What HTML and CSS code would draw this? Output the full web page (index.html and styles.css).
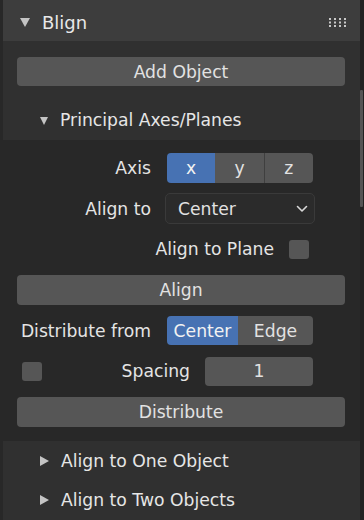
FILE: index.html
```html
<!DOCTYPE html>
<html>
<head>
<meta charset="utf-8">
<link rel="stylesheet" href="styles.css">
</head>
<body>
<div class="app">
  <div class="panel">
    <div class="hdr">
      <span class="tri tri-down-big"></span>
      <span class="title">Blign</span>
      <svg class="grip" width="18" height="10" viewBox="0 0 18 10">
        <g fill="#c8c8c8">
          <rect x="0" y="0" width="2" height="2"/><rect x="5" y="0" width="2" height="2"/><rect x="10" y="0" width="2" height="2"/><rect x="15" y="0" width="2" height="2"/>
          <rect x="0" y="3.5" width="2" height="2"/><rect x="5" y="3.5" width="2" height="2"/><rect x="10" y="3.5" width="2" height="2"/><rect x="15" y="3.5" width="2" height="2"/>
          <rect x="0" y="7" width="2" height="2"/><rect x="5" y="7" width="2" height="2"/><rect x="10" y="7" width="2" height="2"/><rect x="15" y="7" width="2" height="2"/>
        </g>
      </svg>
    </div>
    <div class="pbody">
      <div class="btn wide add">Add Object</div>
      <div class="subhdr">
        <span class="tri tri-down"></span>
        <span class="subtitle">Principal Axes/Planes</span>
      </div>
      <div class="subbody">
        <div class="row">
          <span class="label">Axis</span>
          <div class="seg axis">
            <span class="segbtn on">x</span>
            <span class="segbtn">y</span>
            <span class="segbtn">z</span>
          </div>
        </div>
        <div class="row">
          <span class="label">Align to</span>
          <div class="dropdown">
            <span>Center</span>
            <svg class="chev" width="12" height="8" viewBox="0 0 12 8"><path d="M1.5 1.5 L6 6 L10.5 1.5" fill="none" stroke="#d8d8d8" stroke-width="1.6" stroke-linecap="round" stroke-linejoin="round"/></svg>
          </div>
        </div>
        <div class="row plane">
          <span class="plabel">Align to Plane</span>
          <span class="check"></span>
        </div>
        <div class="btn wide tall">Align</div>
        <div class="row">
          <span class="label">Distribute from</span>
          <div class="seg dist">
            <span class="segbtn on c">Center</span>
            <span class="segbtn e">Edge</span>
          </div>
        </div>
        <div class="row spacing">
          <span class="check first"></span>
          <span class="slabel">Spacing</span>
          <div class="num">1</div>
        </div>
        <div class="btn wide tall">Distribute</div>
      </div>
      <div class="subhdr closed">
        <span class="tri tri-right"></span>
        <span class="subtitle">Align to One Object</span>
      </div>
      <div class="subhdr closed last">
        <span class="tri tri-right"></span>
        <span class="subtitle">Align to Two Objects</span>
      </div>
    </div>
  </div>
  <div class="scroll"><div class="thumb"></div></div>
</div>
</body>
</html>
```

FILE: styles.css
```css
html, body {
  margin: 0;
  padding: 0;
  width: 364px;
  height: 520px;
  overflow: hidden;
  background: #282828;
  font-family: "DejaVu Sans", sans-serif;
  color: #e4e4e4;
}
.app {
  display: flex;
  height: 520px;
}
.panel {
  width: 357px;
  margin-left: 3px;
  display: flex;
  flex-direction: column;
  background: #303030;
}
.hdr {
  height: 41px;
  background: #3d3d3d;
  display: flex;
  align-items: center;
  padding-left: 17px;
  box-sizing: border-box;
}
.tri {
  display: inline-block;
  width: 0;
  height: 0;
}
.tri-down-big {
  border-left: 5px solid transparent;
  border-right: 5px solid transparent;
  border-top: 9px solid #c4c4c4;
  margin-top: 3px;
}
.title {
  font-size: 18px;
  margin-left: 12px;
  margin-top: 3px;
  color: #e8e8e8;
}
.grip {
  margin-left: auto;
  margin-right: 13px;
  margin-top: 4px;
}
.pbody {
  flex: 1;
  display: flex;
  flex-direction: column;
  background: #303030;
}
.btn {
  height: 29px;
  background: #565656;
  border-radius: 4px;
  display: flex;
  align-items: center;
  justify-content: center;
  font-size: 17.2px;
  color: #e2e2e2;
}
.btn.wide {
  margin: 0 15px 0 14px;
}
.btn.tall { height: 30px; }
.btn.add {
  margin-top: 16px;
  margin-bottom: 14px;
}
.subhdr {
  height: 40px;
  display: flex;
  align-items: center;
  padding-left: 37px;
  box-sizing: border-box;
}
.tri-down {
  border-left: 4.5px solid transparent;
  border-right: 4.5px solid transparent;
  border-top: 8px solid #c4c4c4;
  margin-top: 1px;
}
.tri-right {
  border-top: 5px solid transparent;
  border-bottom: 5px solid transparent;
  border-left: 9px solid #c4c4c4;
}
.subtitle {
  font-size: 17.2px;
  margin-left: 12px;
  color: #e6e6e6;
}
.subhdr.closed {
  height: 40px;
  padding-left: 37px;
}
.subhdr.closed.last { height: 39px; }
.subbody {
  background: #282828;
  display: flex;
  flex-direction: column;
  gap: 10.67px;
  padding: 13px 0 14px 0;
}
.row {
  height: 30px;
  display: flex;
  align-items: center;
  margin: 0 15px 0 14px;
  font-size: 17.2px;
}
.label {
  width: 134px;
  text-align: right;
  margin-right: 16px;
  white-space: nowrap;
}
.seg {
  display: flex;
  height: 30px;
  width: 146px;
  border-radius: 4px;
  overflow: hidden;
}
.seg.dist { height: 29px; }
.segbtn {
  flex: 1;
  background: #565656;
  display: flex;
  align-items: center;
  justify-content: center;
  color: #e2e2e2;
}
.segbtn + .segbtn {
  border-left: 1px solid #3f3f3f;
}
.segbtn.on {
  background: #4772b3;
  color: #f2f2f2;
}
.segbtn.on + .segbtn { border-left: none; }
.segbtn.c { flex: 0 0 71px; }
.segbtn.e { flex: 1; }
.dropdown {
  width: 150px;
  height: 31px;
  margin-left: -2px;
  box-sizing: border-box;
  border: 1px solid #3a3a3a;
  background: #2b2b2b;
  border-radius: 5px;
  display: flex;
  align-items: center;
  padding-left: 12px;
  padding-right: 6px;
  color: #e2e2e2;
}
.chev { margin-left: auto; }
.plane {
  justify-content: flex-end;
  padding-right: 36px;
}
.plabel { margin-right: 15px; }
.check {
  width: 20px;
  height: 19px;
  background: #565656;
  border-radius: 3px;
  display: inline-block;
}
.check.first { margin-left: 5px; }
.slabel {
  margin-left: auto;
  margin-right: 15px;
}
.num {
  width: 108px;
  height: 29px;
  background: #565656;
  border-radius: 4px;
  display: flex;
  align-items: center;
  justify-content: center;
  margin-right: 32px;
  color: #e2e2e2;
}
.scroll {
  width: 4px;
  background: #222;
  display: flex;
  flex-direction: column;
}
.thumb {
  width: 3px;
  margin-top: 90px;
  height: 117px;
  background: #555;
  border-radius: 1px;
}
```
